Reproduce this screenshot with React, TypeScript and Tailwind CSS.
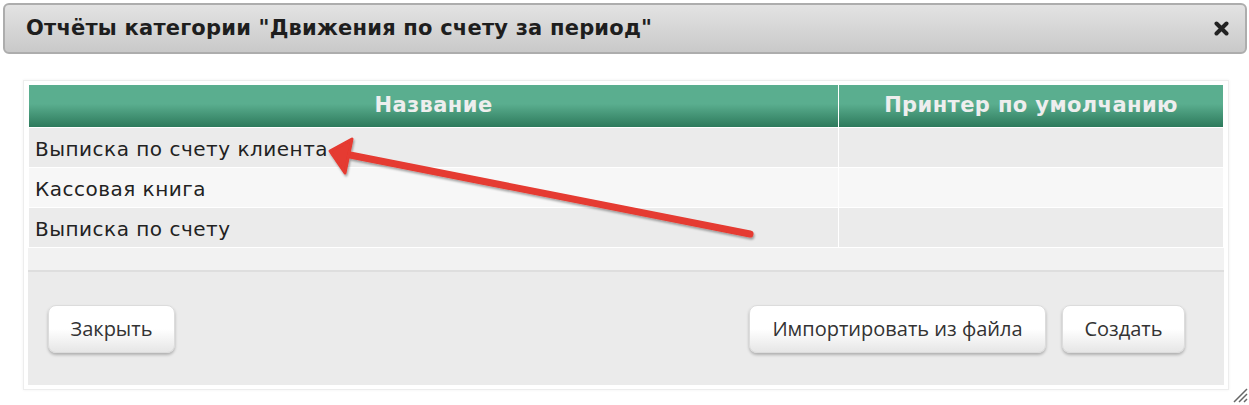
import React from 'react';

const rows = ['Выписка по счету клиента', 'Кассовая книга', 'Выписка по счету'];

const Btn = ({ children, className = '' }: { children: React.ReactNode; className?: string }) => (
  <button
    className={`h-[48px] rounded-[8px] border border-[#dcdcdc] bg-gradient-to-b from-white from-50% to-[#e6e6e6] px-[20px] text-[20px] text-[#333] shadow-[0_2px_3px_rgba(0,0,0,0.25)] font-['Open_Sans',sans-serif] ${className}`}
  >
    {children}
  </button>
);

export default function App() {
  return (
    <div className="relative h-[405px] w-[1249px] overflow-hidden bg-white font-['DejaVu_Sans',sans-serif]">
      {/* title bar */}
      <div className="ml-[3px] mt-[3px] flex h-[51px] w-[1244px] items-center justify-between rounded-[6px] border-2 border-[#adadad] bg-gradient-to-b from-[#e3e3e3] to-[#c9c9c9] pl-[21px] pr-[16px]">
        <span className="text-[21px] font-bold tracking-[0.2px] text-[#1e1e1e]">Отчёты категории "Движения по счету за период"</span>
        <svg width="15" height="15" viewBox="0 0 15 15">
          <path d="M2.5 2.5 L12.5 12.5 M12.5 2.5 L2.5 12.5" stroke="#222" strokeWidth="4" strokeLinecap="round" />
        </svg>
      </div>

      {/* panel */}
      <div className="ml-[23px] mt-[26px] w-[1206px] border border-[#ededed] bg-white p-[4px] shadow-[0_0_3px_rgba(0,0,0,0.06)]">
        <div className="mx-[1px]">
          <div className="grid h-[43px] grid-cols-[810px_1fr] border-b border-white bg-gradient-to-b from-[#5aae8f] from-45% to-[#2d7a5c] text-[21px] font-bold tracking-[0.4px] text-[#eeeeee]">
            <div className="flex items-center justify-center border-r border-white">Название</div>
            <div className="flex items-center justify-center">Принтер по умолчанию</div>
          </div>
          {rows.map((r, i) => (
            <div
              key={r}
              className={`grid h-[40px] grid-cols-[810px_1fr] border-b border-white text-[20px] tracking-[0.5px] text-[#222] ${i % 2 === 0 ? 'bg-[#ebebeb]' : 'bg-[#f7f7f7]'}`}
            >
              <div className="flex items-center border-r border-white pl-[6px] pt-[2px]">{r}</div>
              <div />
            </div>
          ))}
        </div>
        <div className="h-[22px] bg-[#f2f2f2]" />
        <div className="h-[2px] bg-[#dedede]" />
        <div className="flex items-center bg-[#ebebeb] pb-[32px] pl-[20px] pr-[39px] pt-[33px]">
          <Btn className="w-[127px]">Закрыть</Btn>
          <div className="flex-1" />
          <Btn className="w-[297px]">Импортировать из файла</Btn>
          <Btn className="ml-[16px] w-[123px]">Создать</Btn>
        </div>
      </div>

      {/* annotation arrow */}
      <svg className="pointer-events-none absolute left-0 top-0" width="1249" height="405">
        <defs>
          <filter id="sh" x="-10%" y="-10%" width="120%" height="140%">
            <feDropShadow dx="1" dy="2" stdDeviation="1.2" floodColor="#000" floodOpacity="0.35" />
          </filter>
        </defs>
        <g filter="url(#sh)" fill="#e53a30" stroke="#e53a30">
          <line x1="750" y1="234" x2="345" y2="154" strokeWidth="7" strokeLinecap="round" />
          <polygon points="330,151 352,139 345,173" strokeWidth="3" strokeLinejoin="round" />
        </g>
      </svg>

      {/* resize grip */}
      <svg className="absolute bottom-[2px] right-[1px]" width="17" height="17" viewBox="0 0 17 17">
        <path d="M16 3 L3 16 M16 8 L8 16 M16 13 L13 16" stroke="#666" strokeWidth="1.5" />
      </svg>
    </div>
  );
}
